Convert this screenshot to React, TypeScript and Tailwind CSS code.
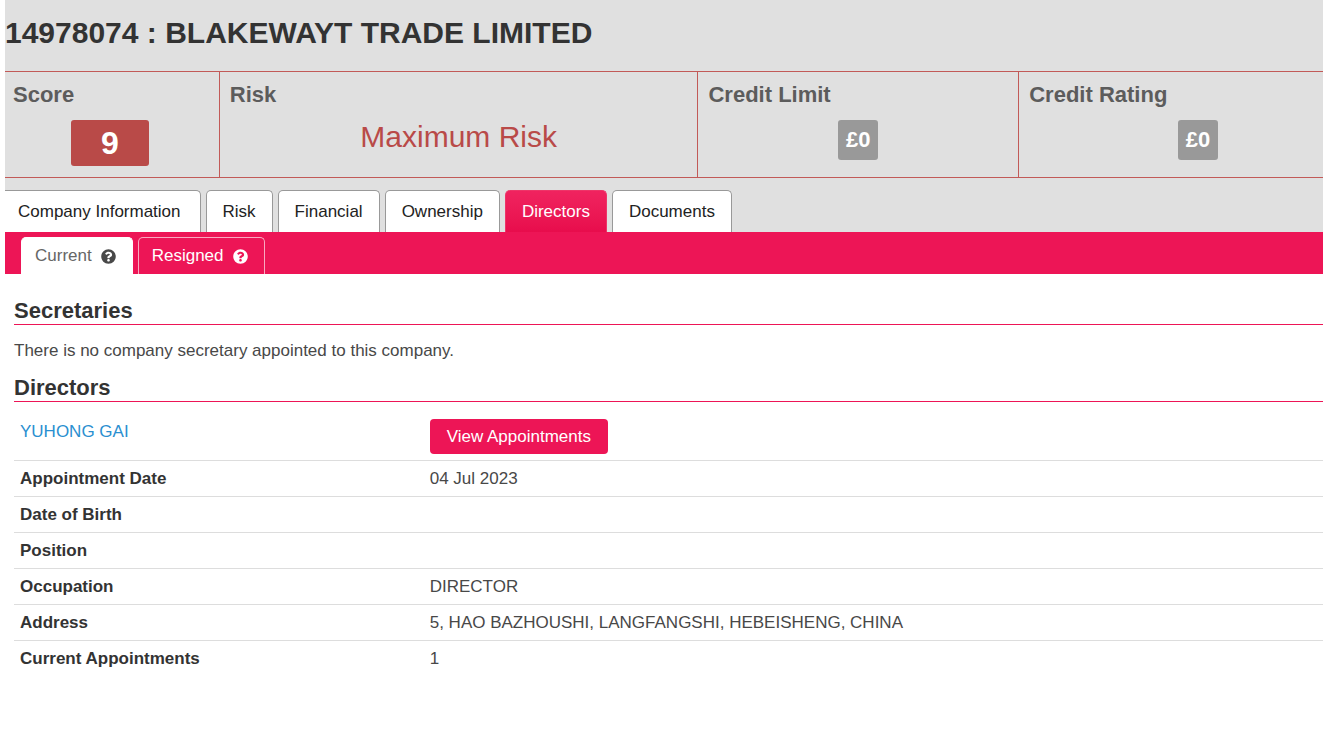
import { useState } from "react";
import { FaQuestionCircle } from "react-icons/fa";

const TABS = ["Company Information", "Risk", "Financial", "Ownership", "Directors", "Documents"];

const SUB_TABS = ["Current", "Resigned"];

const DETAILS = [
  { label: "Appointment Date", value: "04 Jul 2023" },
  { label: "Date of Birth", value: "" },
  { label: "Position", value: "" },
  { label: "Occupation", value: "DIRECTOR" },
  { label: "Address", value: "5, HAO BAZHOUSHI, LANGFANGSHI, HEBEISHENG, CHINA" },
  { label: "Current Appointments", value: "1" },
];

function Summary() {
  const heading = "text-[22px] leading-7 font-bold text-[#5c5c5c]";

  return (
    <section className="grid grid-cols-[215fr_479fr_321fr_304fr] border-y border-[#c25a58]">
      <div className="h-[105px] border-r border-[#c25a58] pt-[9px] pr-3 pl-2">
        <h2 className={heading}>Score</h2>
        <div className="mt-[11px] flex justify-center">
          <span className="w-[78px] rounded-[3px] bg-[#b94a48] text-center text-[32px] leading-[46px] font-bold text-white">
            9
          </span>
        </div>
      </div>
      <div className="border-r border-[#c25a58] px-2.5 pt-[9px]">
        <h2 className={heading}>Risk</h2>
        <p className="mt-2 text-center text-[30px] leading-10 text-[#b94a48]">Maximum Risk</p>
      </div>
      <div className="border-r border-[#c25a58] px-2.5 pt-[9px]">
        <h2 className={heading}>Credit Limit</h2>
        <div className="mt-[11px] flex justify-center">
          <span className="w-10 rounded-[3px] bg-[#999999] text-center text-[22px] leading-10 font-bold text-white">
            £0
          </span>
        </div>
      </div>
      <div className="pt-[9px] pl-2.5">
        <h2 className={heading}>Credit Rating</h2>
        <div className="mt-[11px] flex justify-center pl-11">
          <span className="w-10 rounded-[3px] bg-[#999999] text-center text-[22px] leading-10 font-bold text-white">
            £0
          </span>
        </div>
      </div>
    </section>
  );
}

export default function App() {
  const [tab, setTab] = useState("Directors");
  const [subTab, setSubTab] = useState("Current");

  return (
    <main className="min-h-screen bg-white pl-[5px] font-['Liberation_Sans',Arial,sans-serif] text-[17px] leading-6 text-[#484848]">
      <header className="bg-[#e0e0e0]">
        <h1 className="pt-[13px] pb-[18px] text-[30px] leading-10 font-bold text-[#333333]">
          14978074 : BLAKEWAYT TRADE LIMITED
        </h1>
        <Summary />
        <nav className="flex gap-[5px] pt-3">
          {TABS.map((name) => (
            <button
              key={name}
              type="button"
              onClick={() => setTab(name)}
              className={`h-[42px] rounded-t-[5px] border border-b-0 px-4 first:rounded-tl-none first:border-l-0 first:pr-[19px] first:pl-[13px] ${
                tab === name
                  ? "border-[#ee3468] bg-linear-to-b from-[#f0235f] to-[#e80c4c] text-white"
                  : "border-[#999999] bg-white text-[#222222]"
              }`}
            >
              {name}
            </button>
          ))}
        </nav>
      </header>

      <nav className="flex gap-[5px] bg-[#ed1556] pt-[5px] pl-4">
        {SUB_TABS.map((name) => (
          <button
            key={name}
            type="button"
            onClick={() => setSubTab(name)}
            className={`flex h-[37px] items-center gap-[9px] rounded-t-[5px] border border-b-0 pr-4 pl-[13px] ${
              subTab === name ? "border-white bg-white text-[#666666]" : "border-[#f9a9c0] text-white"
            }`}
          >
            {name}
            <FaQuestionCircle className={`size-[15px] ${subTab === name ? "text-[#484848]" : "text-white"}`} />
          </button>
        ))}
      </nav>

      <div className="pt-6 pl-[9px]">
        <h2 className="border-b border-[#ed1556] text-[22px] leading-[26px] font-bold text-[#333333]">Secretaries</h2>
        <p className="pt-3.5 pb-3">There is no company secretary appointed to this company.</p>
        <h2 className="border-b border-[#ed1556] text-[22px] leading-[26px] font-bold text-[#333333]">Directors</h2>

        <table className="w-full table-fixed border-collapse text-left">
          <tbody>
            <tr>
              <td className="h-[58px] w-[31.3%] px-1.5 pt-[18px] align-top">
                <a href="#yuhong-gai" className="text-[#2a8fd0]">
                  YUHONG GAI
                </a>
              </td>
              <td className="px-1.5 pt-[17px] align-top">
                <button
                  type="button"
                  className="block h-[35px] rounded-[4px] bg-[#ed1556] px-[17px] text-white"
                >
                  View Appointments
                </button>
              </td>
            </tr>
            {DETAILS.map((row) => (
              <tr key={row.label} className="border-t border-[#dddddd]">
                <th scope="row" className="px-1.5 pt-1.5 pb-[5px] font-bold text-[#333333]">
                  {row.label}
                </th>
                <td className="px-1.5 pt-1.5 pb-[5px]">{row.value}</td>
              </tr>
            ))}
          </tbody>
        </table>
      </div>
    </main>
  );
}
